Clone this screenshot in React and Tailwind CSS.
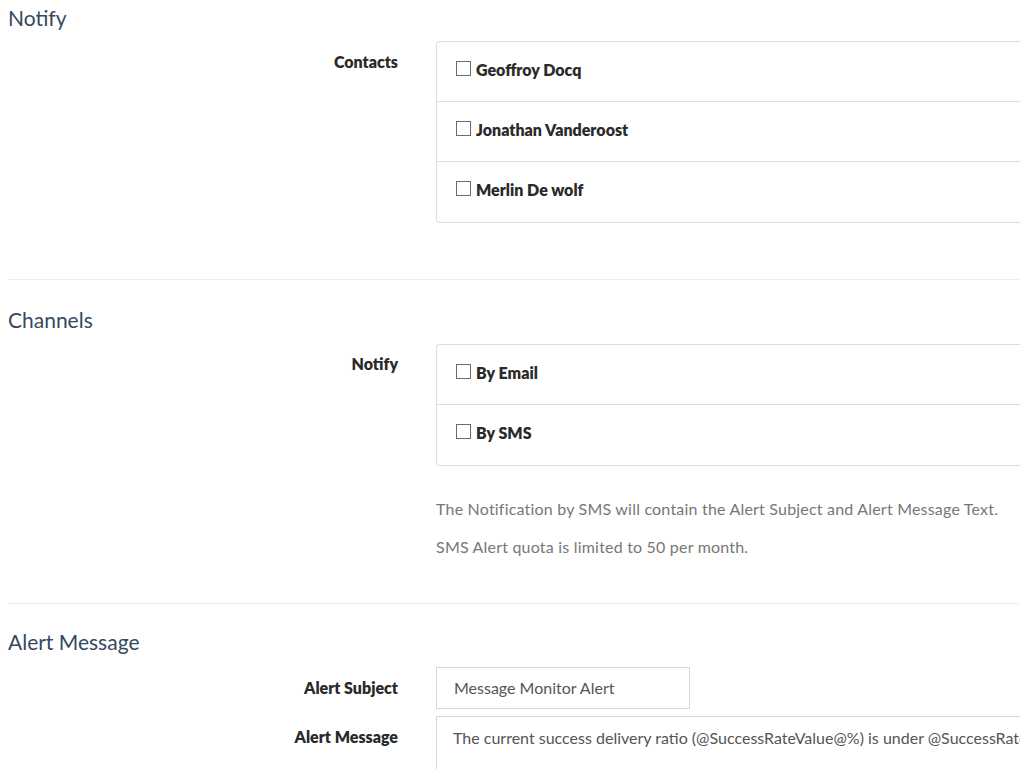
const font = { fontFamily: 'Lato, "Open Sans", sans-serif' }

function Box() {
  return <span className="inline-block w-[15px] h-[15px] border border-[#6b6b6b] bg-white mr-[5px] -mt-[3px] shrink-0" />
}

function CheckPanel({ items }) {
  return (
    <div className="flex-1 border border-[#dddddd] rounded-l-[4px] border-r-0 divide-y divide-[#dddddd]">
      {items.map((item) => (
        <div key={item} className="h-[60px] flex items-center pl-[19px] pb-[4px] text-[16px] font-extrabold text-[#2a2a2a]">
          <Box />
          <span>{item}</span>
        </div>
      ))}
    </div>
  )
}

function Row({ label, labelPad, children }) {
  return (
    <div className="flex">
      <div className={`w-[398px] shrink-0 text-right font-extrabold text-[16px] leading-[20px] text-[#2a2a2a] ${labelPad}`}>
        {label}
      </div>
      <div className="ml-[38px] flex-1 min-w-0">{children}</div>
    </div>
  )
}

function Heading({ children }) {
  return <h2 className="text-[21px] leading-[26px] text-[#34495e] pl-[8px]">{children}</h2>
}

export default function App() {
  return (
    <div className="bg-white w-[1020px] h-[769px] overflow-hidden" style={font}>
      <div className="pt-[5px]">
        <Heading>Notify</Heading>
        <div className="mt-[10px]">
          <Row label="Contacts" labelPad="pt-[11px]">
            <CheckPanel items={['Geoffroy Docq', 'Jonathan Vanderoost', 'Merlin De wolf']} />
          </Row>
        </div>
      </div>

      <hr className="mt-[56px] ml-[8px] border-0 border-t border-[#eeeeee]" />

      <div className="mt-[27px]">
        <Heading>Channels</Heading>
        <div className="mt-[11px]">
          <Row label="Notify" labelPad="pt-[10px]">
            <CheckPanel items={['By Email', 'By SMS']} />
            <div className="text-[16px] leading-[20px] tracking-[0.2px] text-[#777777] mt-[33px] space-y-[18px]">
              <p>The Notification by SMS will contain the Alert Subject and Alert Message Text.</p>
              <p>SMS Alert quota is limited to 50 per month.</p>
            </div>
          </Row>
        </div>
      </div>

      <hr className="mt-[46px] ml-[8px] border-0 border-t border-[#eeeeee]" />

      <div className="mt-[25px]">
        <Heading>Alert Message</Heading>
        <div className="mt-[12px] space-y-[7px]">
          <Row label="Alert Subject" labelPad="pt-[11px]">
            <div className="w-[254px] h-[42px] border border-[#d2d6de] flex items-center pl-[17px] text-[16px] text-[#555555]">
              Message Monitor Alert
            </div>
          </Row>
          <Row label="Alert Message" labelPad="pt-[11px]">
            <div className="h-[80px] border border-[#d2d6de] border-r-0 pt-[11px] pl-[16px] text-[16px] leading-[20px] text-[#555555] whitespace-nowrap overflow-hidden">
              The current success delivery ratio (@SuccessRateValue@%) is under @SuccessRateThreshold@%.
            </div>
          </Row>
        </div>
      </div>
    </div>
  )
}
